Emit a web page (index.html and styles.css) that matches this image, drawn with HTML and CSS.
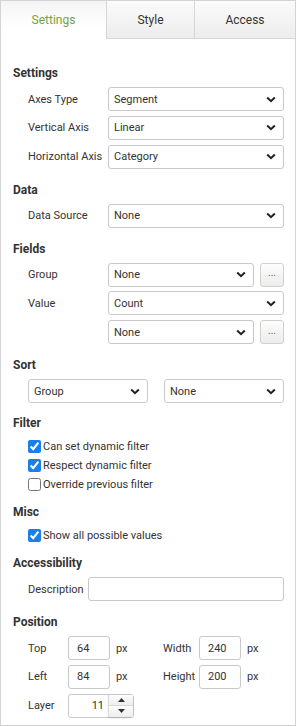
FILE: index.html
```html
<!DOCTYPE html>
<html>
<head>
<meta charset="utf-8">
<link rel="stylesheet" href="styles.css">
</head>
<body>
<div class="panel">
  <div class="tabs">
    <div class="tab active">Settings</div>
    <div class="tab style-tab">Style</div>
    <div class="tab access-tab">Access</div>
  </div>
  <div class="content">
    <div class="section first">
      <div class="heading">Settings</div>
      <div class="rows">
        <div class="row"><span class="label">Axes Type</span><div class="select"><span>Segment</span><svg class="chev" width="10" height="7" viewBox="0 0 10 7"><path d="M1.2 1.5 L5 5.2 L8.8 1.5" fill="none" stroke="#222" stroke-width="2"/></svg></div></div>
        <div class="row"><span class="label">Vertical Axis</span><div class="select"><span>Linear</span><svg class="chev" width="10" height="7" viewBox="0 0 10 7"><path d="M1.2 1.5 L5 5.2 L8.8 1.5" fill="none" stroke="#222" stroke-width="2"/></svg></div></div>
        <div class="row"><span class="label">Horizontal Axis</span><div class="select"><span>Category</span><svg class="chev" width="10" height="7" viewBox="0 0 10 7"><path d="M1.2 1.5 L5 5.2 L8.8 1.5" fill="none" stroke="#222" stroke-width="2"/></svg></div></div>
      </div>
    </div>
    <div class="section">
      <div class="heading">Data</div>
      <div class="rows">
        <div class="row"><span class="label">Data Source</span><div class="select"><span>None</span><svg class="chev" width="10" height="7" viewBox="0 0 10 7"><path d="M1.2 1.5 L5 5.2 L8.8 1.5" fill="none" stroke="#222" stroke-width="2"/></svg></div></div>
      </div>
    </div>
    <div class="section">
      <div class="heading">Fields</div>
      <div class="rows">
        <div class="row"><span class="label">Group</span><div class="select"><span>None</span><svg class="chev" width="10" height="7" viewBox="0 0 10 7"><path d="M1.2 1.5 L5 5.2 L8.8 1.5" fill="none" stroke="#222" stroke-width="2"/></svg></div><div class="more">...</div></div>
        <div class="row"><span class="label">Value</span><div class="select"><span>Count</span><svg class="chev" width="10" height="7" viewBox="0 0 10 7"><path d="M1.2 1.5 L5 5.2 L8.8 1.5" fill="none" stroke="#222" stroke-width="2"/></svg></div></div>
        <div class="row"><span class="label"></span><div class="select"><span>None</span><svg class="chev" width="10" height="7" viewBox="0 0 10 7"><path d="M1.2 1.5 L5 5.2 L8.8 1.5" fill="none" stroke="#222" stroke-width="2"/></svg></div><div class="more">...</div></div>
      </div>
    </div>
    <div class="section">
      <div class="heading">Sort</div>
      <div class="rows">
        <div class="row sort-row"><div class="select"><span>Group</span><svg class="chev" width="10" height="7" viewBox="0 0 10 7"><path d="M1.2 1.5 L5 5.2 L8.8 1.5" fill="none" stroke="#222" stroke-width="2"/></svg></div><div class="select"><span>None</span><svg class="chev" width="10" height="7" viewBox="0 0 10 7"><path d="M1.2 1.5 L5 5.2 L8.8 1.5" fill="none" stroke="#222" stroke-width="2"/></svg></div></div>
      </div>
    </div>
    <div class="section filter">
      <div class="heading">Filter</div>
      <div class="checks">
        <label class="check"><input type="checkbox" checked>Can set dynamic filter</label>
        <label class="check"><input type="checkbox" checked>Respect dynamic filter</label>
        <label class="check"><input type="checkbox">Override previous filter</label>
      </div>
    </div>
    <div class="section after-checks">
      <div class="heading">Misc</div>
      <div class="checks">
        <label class="check"><input type="checkbox" checked>Show all possible values</label>
      </div>
    </div>
    <div class="section after-checks">
      <div class="heading">Accessibility</div>
      <div class="rows">
        <div class="row"><span class="label desc-label">Description</span><div class="textbox"></div></div>
      </div>
    </div>
    <div class="section">
      <div class="heading">Position</div>
      <div class="rows">
        <div class="row pos-row"><span class="plabel">Top</span><div class="num">64</div><span class="unit">px</span><span class="plabel2">Width</span><div class="num">240</div><span class="unit">px</span></div>
        <div class="row pos-row"><span class="plabel">Left</span><div class="num">84</div><span class="unit">px</span><span class="plabel2">Height</span><div class="num">200</div><span class="unit">px</span></div>
        <div class="row pos-row"><span class="plabel">Layer</span><div class="spin"><span class="spin-val">11</span><div class="spin-btns"><div class="spin-btn"><svg width="7" height="4" viewBox="0 0 7 4"><path d="M0 4 L3.5 0 L7 4 Z" fill="#333"/></svg></div><div class="spin-btn"><svg width="7" height="4" viewBox="0 0 7 4"><path d="M0 0 L3.5 4 L7 0 Z" fill="#333"/></svg></div></div></div></div>
      </div>
    </div>
  </div>
</div>
</body>
</html>
```
FILE: styles.css
```css
* { box-sizing: border-box; }
html, body { margin: 0; padding: 0; background: #fff; }
body {
  font-family: Roboto, "Liberation Sans", Arial, sans-serif;
  font-size: 11px;
  color: #333;
}
.panel {
  width: 296px;
  height: 726px;
  border: 1px solid #d4d4d4;
  border-bottom-color: #cfcfcf;
  background: #fff;
}
.tabs {
  display: flex;
  height: 38px;
}
.tab {
  display: flex;
  align-items: center;
  justify-content: center;
  font-size: 12px;
  color: #333;
  background: linear-gradient(#fbfbfb, #ececec);
  border-bottom: 1px solid #d6d6d6;
  border-left: 1px solid #d6d6d6;
}
.tab.active {
  width: 105px;
  color: #73a33c;
  background: linear-gradient(#f4f4f4, #ffffff 70%);
  border-bottom: none;
  border-left: none;
}
.style-tab { width: 88px; }
.access-tab { flex: 1; }
.content {
  padding: 26px 11px 0 12px;
}
.section { margin-top: 13px; }
.section.first { margin-top: 0; }
.section.filter { margin-top: 12px; }
.section.after-checks { margin-top: 10px; }
.heading {
  font-weight: bold;
  font-size: 12px;
  line-height: 16px;
  height: 16px;
  margin-bottom: 6px;
  color: #333;
}
.rows {
  display: flex;
  flex-direction: column;
  gap: 4.75px;
  padding-left: 15px;
}
.row {
  display: flex;
  align-items: center;
  height: 24px;
}
.label {
  width: 80px;
  flex: none;
  white-space: nowrap;
}
.desc-label { width: 60px; }
.select {
  flex: 1;
  height: 24px;
  border: 1px solid #c9c9c9;
  border-radius: 3px;
  display: flex;
  align-items: center;
  justify-content: space-between;
  padding: 0 7px 0 5px;
  background: #fff;
  color: #333;
}
.chev { display: block; }
.more {
  width: 24px;
  height: 24px;
  margin-left: 6px;
  flex: none;
  border: 1px solid #d0d0d0;
  border-radius: 3px;
  background: linear-gradient(#fdfdfd, #ececec);
  display: flex;
  align-items: center;
  justify-content: center;
  font-size: 10px;
  line-height: 10px;
  color: #555;
  padding-bottom: 3px;
}
.sort-row { gap: 16px; }
.checks {
  padding-left: 15px;
  display: flex;
  flex-direction: column;
}
.check {
  display: flex;
  align-items: center;
  height: 19px;
  white-space: nowrap;
}
.check input {
  margin: 0 2px 0 0;
  width: 13px;
  height: 13px;
  accent-color: #1a7fe8;
}
.textbox {
  flex: 1;
  height: 24px;
  border: 1px solid #c9c9c9;
  border-radius: 3px;
}
.plabel { width: 40px; flex: none; }
.plabel2 { width: 36px; flex: none; }
.num {
  width: 42px;
  height: 24px;
  flex: none;
  border: 1px solid #c9c9c9;
  border-radius: 3px;
  padding: 0 8px;
  display: flex;
  align-items: center;
}
.unit {
  width: 53px;
  flex: none;
  padding-left: 6px;
}
.spin {
  width: 66px;
  height: 24px;
  flex: none;
  border: 1px solid #c9c9c9;
  border-radius: 3px;
  display: flex;
}
.spin-val {
  flex: 1;
  text-align: right;
  padding-right: 4px;
  line-height: 22px;
}
.spin-btns {
  width: 25px;
  display: flex;
  flex-direction: column;
  border-left: 1px solid #dcdcdc;
  box-shadow: 0 1px 2px rgba(0,0,0,0.15);
  border-radius: 0 3px 3px 0;
}
.spin-btn {
  flex: 1;
  display: flex;
  align-items: center;
  justify-content: center;
  background: linear-gradient(#fdfdfd, #eeeeee);
}
.spin-btn + .spin-btn { border-top: 1px solid #d8d8d8; }
```
